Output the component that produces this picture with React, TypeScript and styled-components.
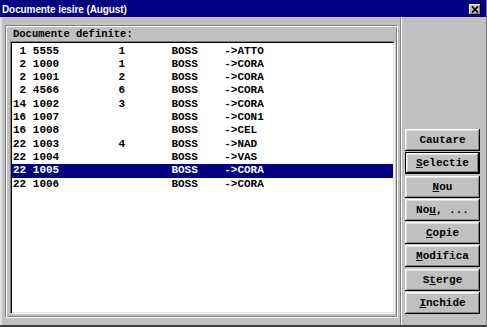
import React from "react";
import styled, { createGlobalStyle } from "styled-components";

const GlobalStyle = createGlobalStyle`
  html, body {
    margin: 0;
    padding: 0;
    background: #c0c0c0;
  }
  #root {
    width: 487px;
    height: 327px;
  }
`;

type Doc = {
  nr: string;
  code: string;
  count: string;
  user: string;
  dest: string;
};

const docs: Doc[] = [
  { nr: "1", code: "5555", count: "1", user: "BOSS", dest: "->ATTO" },
  { nr: "2", code: "1000", count: "1", user: "BOSS", dest: "->CORA" },
  { nr: "2", code: "1001", count: "2", user: "BOSS", dest: "->CORA" },
  { nr: "2", code: "4566", count: "6", user: "BOSS", dest: "->CORA" },
  { nr: "14", code: "1002", count: "3", user: "BOSS", dest: "->CORA" },
  { nr: "16", code: "1007", count: "", user: "BOSS", dest: "->CON1" },
  { nr: "16", code: "1008", count: "", user: "BOSS", dest: "->CEL" },
  { nr: "22", code: "1003", count: "4", user: "BOSS", dest: "->NAD" },
  { nr: "22", code: "1004", count: "", user: "BOSS", dest: "->VAS" },
  { nr: "22", code: "1005", count: "", user: "BOSS", dest: "->CORA" },
  { nr: "22", code: "1006", count: "", user: "BOSS", dest: "->CORA" },
];

const SELECTED = 9;

export default function App() {
  return (
    <>
      <GlobalStyle />
      <Window>
        <TitleBar>
          <Title>Documente iesire (August)</Title>
          <CloseButton>
            <svg width="8" height="7" viewBox="0 0 8 7">
              <path d="M1 0.5 L7 6.5 M7 0.5 L1 6.5" stroke="#000" strokeWidth="1.7" />
            </svg>
          </CloseButton>
        </TitleBar>
        <Body>
          <LeftPane>
            <Frame>
              <Label>Documente definite:</Label>
              <ListBox>
                {docs.map((d, i) => (
                  <Row key={i} $selected={i === SELECTED}>
                    <Nr>{d.nr}</Nr>
                    <Code>{d.code}</Code>
                    <Count>{d.count}</Count>
                    <User>{d.user}</User>
                    <span>{d.dest}</span>
                  </Row>
                ))}
              </ListBox>
            </Frame>
          </LeftPane>
          <RightPane>
            <Button>Cautare</Button>
            <Button $default>
              <Key>S</Key>electie
            </Button>
            <Button>
              <Key>N</Key>ou
            </Button>
            <Button>
              No<Key>u</Key>, ...
            </Button>
            <Button>
              <Key>C</Key>opie
            </Button>
            <Button>
              <Key>M</Key>odifica
            </Button>
            <Button>
              S<Key>t</Key>erge
            </Button>
            <Button>
              <Key>I</Key>nchide
            </Button>
          </RightPane>
        </Body>
      </Window>
    </>
  );
}

const mono = `"Liberation Mono", "Courier New", monospace`;

const Window = styled.div`
  width: 487px;
  height: 327px;
  box-sizing: border-box;
  background: #c0c0c0;
  border-right: 1px solid #808080;
  border-bottom: 2px solid #404040;
  display: flex;
  flex-direction: column;
  overflow: hidden;
`;

const TitleBar = styled.div`
  height: 17px;
  flex: none;
  background: #000080;
  display: flex;
  align-items: center;
  justify-content: space-between;
  padding: 0 5px 0 2px;
`;

const Title = styled.div`
  font-family: "Liberation Sans", Arial, sans-serif;
  font-weight: bold;
  font-size: 10px;
  letter-spacing: -0.1px;
  color: #ffffff;
  white-space: nowrap;
  margin-top: 1px;
`;

const CloseButton = styled.div`
  width: 12px;
  height: 11px;
  box-sizing: border-box;
  background: #c0c0c0;
  display: flex;
  align-items: center;
  justify-content: center;
  box-shadow: inset -1px -1px #000, inset 1px 1px #fff, inset -2px -2px #808080;
  margin-top: 1px;
`;

const Body = styled.div`
  flex: 1;
  display: flex;
  border-left: 2px solid #dfdfdf;
`;

const LeftPane = styled.div`
  width: 400px;
  box-sizing: border-box;
  padding: 8px 3px 7px 3px;
  border-right: 1px solid #ffffff;
  box-shadow: inset -1px 0 #808080;
  display: flex;
`;

const Frame = styled.div`
  flex: 1;
  display: flex;
  flex-direction: column;
  border: 1px solid;
  border-color: #808080 #ffffff #ffffff #808080;
  box-shadow: inset 1px 1px #fff, inset -1px -1px #808080;
  padding: 1px 2px 3px 4px;
`;

const Label = styled.div`
  height: 14px;
  line-height: 14px;
  padding-left: 3px;
  font-family: ${mono};
  font-weight: bold;
  font-size: 10.5px;
  color: #000;
`;

const ListBox = styled.div`
  flex: 1;
  background: #ffffff;
  border: 1px solid;
  border-color: #808080 #ffffff #ffffff #808080;
  box-shadow: inset 1px 1px #000, inset -1px -1px #dfdfdf;
  padding: 2.5px 1px 0 1px;
`;

const Row = styled.div<{ $selected?: boolean }>`
  display: flex;
  height: 13.33px;
  line-height: 13.33px;
  padding-left: 1px;
  font-family: ${mono};
  font-weight: bold;
  font-size: 11px;
  white-space: pre;
  color: ${(p) => (p.$selected ? "#ffffff" : "#000000")};
  background: ${(p) => (p.$selected ? "#000080" : "transparent")};
`;

const Nr = styled.span`
  width: 2ch;
  text-align: right;
`;

const Code = styled.span`
  width: 13ch;
  margin-left: 1ch;
`;

const Count = styled.span`
  width: 8ch;
`;

const User = styled.span`
  width: 8ch;
`;

const RightPane = styled.div`
  flex: 1;
  display: flex;
  flex-direction: column;
  justify-content: flex-end;
  gap: 1.3px;
  padding: 0 6px 11px 3px;
`;

const Button = styled.div<{ $default?: boolean }>`
  height: 22px;
  box-sizing: border-box;
  display: flex;
  align-items: center;
  justify-content: center;
  font-family: ${mono};
  font-weight: bold;
  font-size: 11px;
  color: #000;
  background: #c0c0c0;
  border: ${(p) => (p.$default ? "1px solid #000" : "none")};
  box-shadow: inset -1px -1px #000, inset 1px 1px #fff, inset -2px -2px #808080,
    inset 2px 2px #dfdfdf;
`;

const Key = styled.span`
  text-decoration: underline;
`;
